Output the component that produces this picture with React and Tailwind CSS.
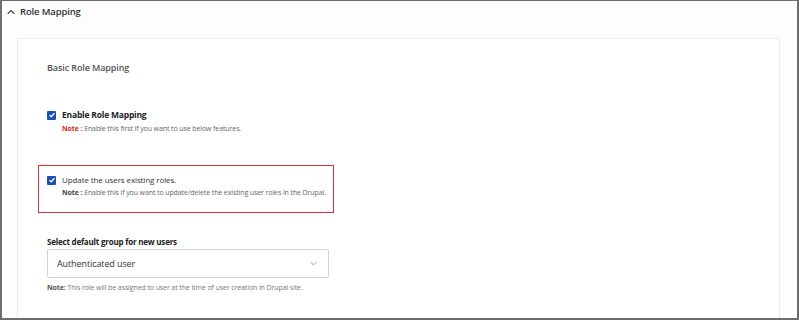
import { ChevronUp, ChevronDown } from 'lucide-react'

const CheckBox = () => (
  <span className="w-[9px] h-[9px] rounded-[1px] bg-[#1c4fb0] flex items-center justify-center shrink-0">
    <svg viewBox="0 0 10 10" className="w-[8px] h-[8px]">
      <path d="M2 5.2 L4.1 7.2 L8 2.8" fill="none" stroke="white" strokeWidth="1.6" />
    </svg>
  </span>
)

const App = () => {
  return (
    <div
      className="w-[799px] h-[320px] bg-[#fdfdfd] overflow-hidden"
      style={{ fontFamily: '"Open Sans", "Noto Sans", sans-serif' }}
    >
      <div className="h-[320px] border-l-2 border-t border-r-2 border-b-2 border-[#6e6e6e] flex flex-col">
        {/* Header */}
        <div className="h-[37px] flex items-start pt-[3px] pl-[3px]">
          <div className="flex items-center gap-[3px] h-[16px]">
            <ChevronUp className="w-[12px] h-[12px] text-[#444]" strokeWidth={2.2} />
            <span className="text-[9.5px] font-semibold text-[#333] tracking-[-0.15px]">Role Mapping</span>
          </div>
        </div>

        {/* Card */}
        <div className="flex-1 ml-[15px] mr-[17px] bg-white border border-b-0 border-[#ececec] pl-[29px] pt-[21px]">
          <h3 className="text-[9px] font-semibold text-[#555] leading-[16px] tracking-[-0.1px]">Basic Role Mapping</h3>

          {/* Enable */}
          <div className="mt-[32px]">
            <div className="flex items-center gap-[6px] h-[14px]">
              <CheckBox />
              <span className="text-[8.5px] font-bold text-[#222] tracking-[-0.2px]">Enable Role Mapping</span>
            </div>
            <p className="ml-[15px] mt-[1px] text-[7px] leading-[12px] text-[#666] whitespace-nowrap tracking-[-0.1px]">
              <span className="font-bold text-[#e02424]">Note : </span>
              Enable this first if you want to use below features.
            </p>
          </div>

          {/* Update existing roles */}
          <div className="mt-[30px] -ml-[9px] w-[296px] h-[48px] border border-[#e0313a] pl-[8px] pt-[7px]">
            <div className="flex items-center gap-[6px] h-[14px]">
              <CheckBox />
              <span className="text-[8px] text-[#333] tracking-[-0.1px]">Update the users existing roles.</span>
            </div>
            <p className="ml-[15px] text-[7px] leading-[12px] text-[#666] whitespace-nowrap tracking-[-0.1px]">
              <span className="font-bold text-[#444]">Note : </span>
              Enable this if you want to update/delete the existing user roles in the Drupal.
            </p>
          </div>

          {/* Default group */}
          <div className="mt-[23px]">
            <label className="block text-[8px] font-bold text-[#222] leading-[12px] tracking-[-0.2px]">
              Select default group for new users
            </label>
            <div className="mt-[1px] w-[282px] h-[29px] border border-[#d4d4d4] rounded-[2px] bg-white flex items-center justify-between pl-[9px] pr-[9px]">
              <span className="text-[9px] text-[#333] tracking-[-0.1px]">Authenticated user</span>
              <ChevronDown className="w-[11px] h-[11px] text-[#777]" strokeWidth={1.5} />
            </div>
            <p className="mt-[4px] text-[7px] leading-[12px] text-[#777] whitespace-nowrap tracking-[-0.1px]">
              <span className="font-bold text-[#555]">Note: </span>
              This role will be assigned to user at the time of user creation in Drupal site.
            </p>
          </div>
        </div>
      </div>
    </div>
  )
}

export default App
